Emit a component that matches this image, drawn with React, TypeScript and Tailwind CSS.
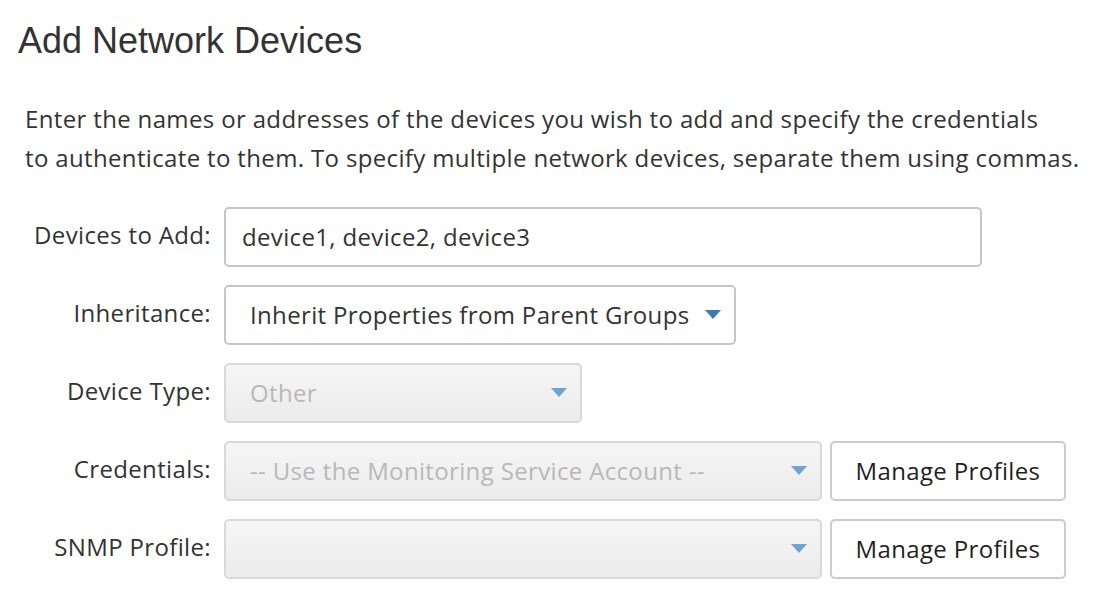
import React from 'react';

const bodyFont = { fontFamily: '"Open Sans", "Noto Sans", sans-serif' };

function Caret({ disabled }: { disabled?: boolean }) {
  return (
    <svg width="16" height="10" viewBox="0 0 16 10" className="shrink-0" aria-hidden="true">
      <path d="M0 0 H16 L8 9 Z" fill={disabled ? '#6fa3d3' : '#3a7bb9'} />
    </svg>
  );
}

function Select({ value, width, disabled }: { value: string; width: string; disabled?: boolean }) {
  const base = 'flex h-[60px] items-center justify-between rounded-[5px] border-2 pl-[24px] pr-[13px] ';
  const look = disabled
    ? 'border-[#d9d9d9] bg-gradient-to-b from-[#f6f6f6] to-[#ebebeb] text-[#b8b8b8]'
    : 'border-[#c6c6c6] bg-white text-[#333333]';
  return (
    <div className={base + look + ' ' + width}>
      <span className="truncate">{value}</span>
      <Caret disabled={disabled} />
    </div>
  );
}

function ManageButton() {
  return (
    <button className="h-[60px] w-[236px] rounded-[5px] border-2 border-[#cccccc] bg-white text-[#1f1f1f]">
      Manage Profiles
    </button>
  );
}

function Row({ label, children }: { label: string; children: React.ReactNode }) {
  return (
    <div className="flex items-center gap-[13px]">
      <label className="w-[193px] shrink-0 pb-[5px] text-right text-[#333333]">{label}</label>
      {children}
    </div>
  );
}

export default function App() {
  return (
    <div className="min-h-screen bg-white pl-[18px] pt-[19px] text-[24px] tracking-[0.35px]" style={bodyFont}>
      <h1
        className="text-[36px] font-normal leading-[44px] tracking-normal text-[#333333]"
        style={{ fontFamily: '"Liberation Sans", Arial, sans-serif' }}
      >
        Add Network Devices
      </h1>

      <p className="mt-[36px] pl-[7px] leading-[39px] text-[#333333]">
        Enter the names or addresses of the devices you wish to add and specify the credentials
        <br />
        to authenticate to them. To specify multiple network devices, separate them using commas.
      </p>

      <div className="mt-[30px] flex flex-col gap-[18px]">
        <Row label="Devices to Add:">
          <div className="flex h-[60px] w-[758px] items-center rounded-[5px] border-2 border-[#c6c6c6] bg-white pl-[16px] text-[#333333]">
            device1, device2, device3
          </div>
        </Row>
        <Row label="Inheritance:">
          <Select value="Inherit Properties from Parent Groups" width="w-[512px]" />
        </Row>
        <Row label="Device Type:">
          <Select value="Other" width="w-[358px]" disabled />
        </Row>
        <Row label="Credentials:">
          <div className="flex gap-[8px]">
            <Select value="-- Use the Monitoring Service Account --" width="w-[598px]" disabled />
            <ManageButton />
          </div>
        </Row>
        <Row label="SNMP Profile:">
          <div className="flex gap-[8px]">
            <Select value="" width="w-[598px]" disabled />
            <ManageButton />
          </div>
        </Row>
      </div>
    </div>
  );
}
